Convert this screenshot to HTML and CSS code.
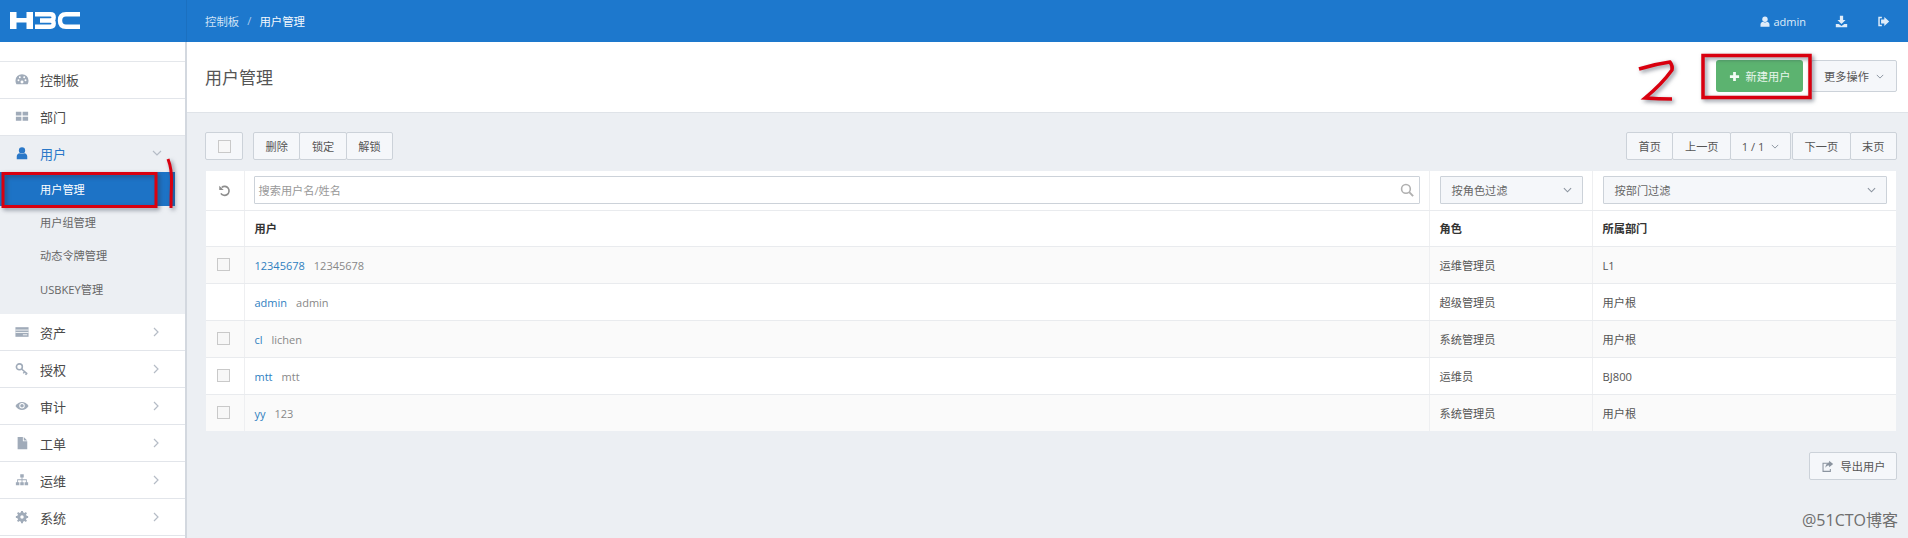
FILE: index.html
```html
<!DOCTYPE html>
<html lang="zh-CN">
<head>
<meta charset="utf-8">
<title>用户管理</title>
<link rel="stylesheet" href="styles.css">
</head>
<body>
<svg class="defs" width="0" height="0" aria-hidden="true">
  <symbol id="i-dash" viewBox="0 0 16 16"><path d="M8 2.500a7.500 7.500 0 0 0-7.500 7.500c0 1.500.4 2.800 1.100 3.900h12.800c.7-1.100 1.100-2.400 1.100-3.900A7.500 7.500 0 0 0 8 2.500z" fill="currentColor"/><g fill="#fff"><circle cx="4" cy="9.500" r="1.100"/><circle cx="5.500" cy="6" r="1.100"/><circle cx="10.500" cy="6" r="1.100"/><circle cx="12" cy="9.500" r="1.100"/><circle cx="8" cy="11.500" r="1.700"/></g></symbol>
  <symbol id="i-grid" viewBox="0 0 16 16"><path d="M1 3h6.300v4.500H1zM8.700 3H15v4.500H8.700zM1 8.800h6.300v4.500H1zM8.700 8.800H15v4.500H8.700z" fill="currentColor"/></symbol>
  <symbol id="i-user" viewBox="0 0 16 16"><circle cx="8" cy="5" r="3.600" fill="currentColor"/><path d="M2 15v-3c0-2 1.500-3.500 3.300-3.700.8.600 1.700.9 2.700.9s1.900-.3 2.700-.9C12.500 8.500 14 10 14 12v3z" fill="currentColor"/></symbol>
  <symbol id="i-card" viewBox="0 0 16 16"><path d="M.5 2.500h15v11H.5z" fill="currentColor"/><path d="M.5 5.800h15M.5 8.500h15M9 11.200h5" stroke="#fff" fill="none"/></symbol>
  <symbol id="i-key" viewBox="0 0 16 16"><circle cx="5" cy="5.500" r="3.400" fill="none" stroke="currentColor" stroke-width="1.800"/><path d="M7.500 8l6.500 5.500M11 11l-1.500 2M13.500 13l-1.500 1.500" fill="none" stroke="currentColor" stroke-width="1.800"/></symbol>
  <symbol id="i-eye" viewBox="0 0 16 16"><path d="M.5 8C2.500 5 5 3.500 8 3.500S13.500 5 15.500 8c-2 3-4.500 4.500-7.500 4.500S2.500 11 .5 8z" fill="currentColor"/><circle cx="8" cy="7.800" r="3.100" fill="#fff"/><circle cx="8" cy="7.800" r="2" fill="currentColor"/></symbol>
  <symbol id="i-file" viewBox="0 0 16 16"><path d="M3 1h6v5h5v9H3zM10 1l4 4h-4z" fill="currentColor"/></symbol>
  <symbol id="i-site" viewBox="0 0 16 16"><path d="M6 1.500h4V5H8.500v2.200H13.500V10.500H15V14h-4v-3.500h1.500V8.200h-4v2.300H10V14H6v-3.500h1.500V8.200h-4v2.300H5V14H1v-3.500h1.500V7.200h5V5H6z" fill="currentColor"/></symbol>
  <symbol id="i-cog" viewBox="0 0 16 16"><circle cx="8" cy="8" r="4" fill="none" stroke="currentColor" stroke-width="3"/><path d="M8 1v14M1 8h14M3 3l10 10M13 3L3 13" stroke="currentColor" stroke-width="2.200"/><circle cx="8" cy="8" r="2" fill="#fff"/></symbol>
  <symbol id="i-down" viewBox="0 0 10 6"><path d="M1 1l4 4 4-4" fill="none" stroke="currentColor" stroke-width="1.200"/></symbol>
  <symbol id="i-right" viewBox="0 0 6 10"><path d="M1 1l4 4-4 4" fill="none" stroke="currentColor" stroke-width="1.200"/></symbol>
  <symbol id="i-undo" viewBox="0 0 16 16"><path d="M4.500 4.300A5.500 5.500 0 1 1 3.500 11.500" fill="none" stroke="currentColor" stroke-width="2"/><path d="M1.500 2v5.500H7z" fill="currentColor"/></symbol>
  <symbol id="i-search" viewBox="0 0 16 16"><circle cx="6.800" cy="6.800" r="5" fill="none" stroke="currentColor" stroke-width="1.800"/><path d="M10.500 10.500L15 15" stroke="currentColor" stroke-width="2.200"/></symbol>
  <symbol id="i-plus" viewBox="0 0 12 12"><path d="M4.500 1h3v3.500H11v3H7.500V11h-3V7.500H1v-3h3.500z" fill="currentColor"/></symbol>
  <symbol id="i-share" viewBox="0 0 16 16"><path d="M11 4H2.500v10h9v-3" fill="none" stroke="currentColor" stroke-width="1.300"/><path d="M10 1l5 4-5 4V6.800C8 6.800 6.500 7.500 5.500 9.500 5.500 6.500 7.500 3.500 10 3.500z" fill="currentColor"/></symbol>
  <symbol id="i-dl" viewBox="0 0 16 16"><path d="M6 1h4v5h3l-5 5-5-5h3z" fill="currentColor"/><path d="M1 11h3.500L8 13.500 11.500 11H15v4H1z" fill="currentColor"/></symbol>
  <symbol id="i-out" viewBox="0 0 16 16"><path d="M6 3H2.500v10H6" fill="none" stroke="currentColor" stroke-width="1.800"/><path d="M9 2.500L15 8l-6 5.500V10.500H5v-5h4z" fill="currentColor"/></symbol>
</svg>

<header class="topbar">
  <div class="brand">
    <svg class="logo" viewBox="0 0 90 42" width="90" height="42" role="img" aria-label="H3C">
      <path d="M10 12h6.500v6h10v-6H33v17h-6.500v-6.500h-10V29H10z" fill="#fff"/>
      <path d="M35 14.200h15.300q3.400 0 3.400 3.100t-3.400 3.200H40M50.300 20.500q3.400 0 3.400 3.100t-3.400 3.200H35" fill="none" stroke="#fff" stroke-width="4.400"/>
      <path d="M80 14.200H66q-6 0-6 6.300t6 6.300h14" fill="none" stroke="#fff" stroke-width="4.400"/>
    </svg>
  </div>
  <nav class="crumbs"><span>控制板</span><span class="sep">/</span><span class="here">用户管理</span></nav>
  <div class="tools">
    <span class="tool-user"><svg class="ico12"><use href="#i-user"/></svg>admin</span>
    <svg class="ico13 tool-dl"><use href="#i-dl"/></svg>
    <svg class="ico13 tool-out"><use href="#i-out"/></svg>
  </div>
</header>

<div class="body">
  <aside class="side">
    <div class="item raised"><svg class="mi"><use href="#i-dash"/></svg>控制板</div>
    <div class="item raised"><svg class="mi"><use href="#i-grid"/></svg>部门</div>
    <div class="group">
      <div class="item open raised"><svg class="mi"><use href="#i-user"/></svg>用户<svg class="chev-d"><use href="#i-down"/></svg></div>
      <div class="sub active">用户管理</div>
      <div class="sub">用户组管理</div>
      <div class="sub">动态令牌管理</div>
      <div class="sub">USBKEY管理</div>
    </div>
    <div class="item"><svg class="mi"><use href="#i-card"/></svg>资产<svg class="chev-r"><use href="#i-right"/></svg></div>
    <div class="item"><svg class="mi"><use href="#i-key"/></svg>授权<svg class="chev-r"><use href="#i-right"/></svg></div>
    <div class="item"><svg class="mi"><use href="#i-eye"/></svg>审计<svg class="chev-r"><use href="#i-right"/></svg></div>
    <div class="item"><svg class="mi"><use href="#i-file"/></svg>工单<svg class="chev-r"><use href="#i-right"/></svg></div>
    <div class="item"><svg class="mi"><use href="#i-site"/></svg>运维<svg class="chev-r"><use href="#i-right"/></svg></div>
    <div class="item"><svg class="mi"><use href="#i-cog"/></svg>系统<svg class="chev-r"><use href="#i-right"/></svg></div>
  </aside>

  <main class="main">
    <div class="head">
      <h1 class="title">用户管理</h1>
      <div class="head-actions">
        <button class="btn-new"><svg class="ico-plus"><use href="#i-plus"/></svg>新建用户</button>
        <button class="btn more">更多操作<svg class="chev-d"><use href="#i-down"/></svg></button>
      </div>
    </div>

    <div class="content">
      <div class="toolbar">
        <button class="btn check-btn"><span class="box"></span></button>
        <div class="btn-group">
          <button class="btn">删除</button><button class="btn">锁定</button><button class="btn">解锁</button>
        </div>
        <div class="pager btn-group">
          <button class="btn">首页</button><button class="btn">上一页</button><button class="btn page-now">1 / 1<svg class="chev-d"><use href="#i-down"/></svg></button><button class="btn page-next">下一页</button><button class="btn">末页</button>
        </div>
      </div>

      <table class="grid">
        <colgroup><col class="c1"><col><col class="c3"><col class="c4"></colgroup>
        <tr class="filter">
          <td class="ck"><svg class="ico-undo"><use href="#i-undo"/></svg></td>
          <td><div class="search"><span>搜索用户名/姓名</span><svg class="ico-search"><use href="#i-search"/></svg></div></td>
          <td><div class="select">按角色过滤<svg class="chev-d"><use href="#i-down"/></svg></div></td>
          <td><div class="select">按部门过滤<svg class="chev-d"><use href="#i-down"/></svg></div></td>
        </tr>
        <tr class="heads"><th></th><th>用户</th><th>角色</th><th>所属部门</th></tr>
        <tr class="row odd"><td class="ck"><span class="box"></span></td><td><a class="name">12345678</a><span class="real">12345678</span></td><td>运维管理员</td><td>L1</td></tr>
        <tr class="row"><td class="ck"></td><td><a class="name">admin</a><span class="real">admin</span></td><td>超级管理员</td><td>用户根</td></tr>
        <tr class="row odd"><td class="ck"><span class="box"></span></td><td><a class="name">cl</a><span class="real">lichen</span></td><td>系统管理员</td><td>用户根</td></tr>
        <tr class="row"><td class="ck"><span class="box"></span></td><td><a class="name">mtt</a><span class="real">mtt</span></td><td>运维员</td><td>BJ800</td></tr>
        <tr class="row odd"><td class="ck"><span class="box"></span></td><td><a class="name">yy</a><span class="real">123</span></td><td>系统管理员</td><td>用户根</td></tr>
      </table>

      <div class="foot">
        <button class="btn export"><svg class="ico13"><use href="#i-share"/></svg>导出用户</button>
      </div>
    </div>
  </main>
</div>

<div class="watermark">@51CTO博客</div>

<svg class="marks" width="1908" height="538" aria-hidden="true">
  <rect class="mark" x="3" y="173.500" width="153" height="33"/>
  <path class="mark" d="M168 159q4 10 3.500 24t-.5 25"/>
  <rect class="mark thick" x="1703" y="55.500" width="107" height="42"/>
  <path class="mark thick" d="M1639 69q16-5 31-7 3 4 2 8-10 14-27 28 14 1 27 1"/>
</svg>
</body>
</html>
```
FILE: styles.css
```css
* { box-sizing: border-box; }
html, body { margin: 0; height: 538px; overflow: hidden; }
body {
  position: relative;
  font-family: "Open Sans", "Noto Sans CJK SC", sans-serif;
  font-size: 11.2px;
  color: #555;
  background: #eceff3;
}
.defs { position: absolute; }
button { font: inherit; color: inherit; margin: 0; cursor: pointer; }

/* top bar */
.topbar { height: 42px; background: #1d78cd; display: flex; align-items: center; color: #fff; }
.brand { width: 187px; height: 42px; flex: none; border-right: 1px solid #1b70c0; }
.logo { display: block; }
.crumbs { margin-left: 18px; display: flex; color: #cfe2f6; font-size: 11.4px; }
.sep { margin: 0 8px; color: #a9cbee; }
.here { color: #f4f8fd; }
.tools { margin-left: auto; margin-right: 18px; display: flex; align-items: center; color: #dfecf9; }
.tool-user { display: flex; align-items: center; gap: 2px; font-size: 11px; }
.tool-dl { margin-left: 29px; }
.tool-out { margin-left: 29px; }
.ico12 { width: 12px; height: 13px; }
.ico13 { width: 13px; height: 13px; }

/* layout */
.body { display: flex; height: 496px; }

/* sidebar */
.side {
  width: 187px; flex: none; padding-top: 19px;
  background: #fff; border-right: 2px solid #d3d8df;
}
.side > .item:first-child { border-top: 1px solid #e4e7eb; height: 38px; }
.item {
  height: 37px; display: flex; align-items: center;
  padding-left: 15px; font-size: 13px; color: #4a4a4a;
  background: #fff; border-bottom: 1px solid #e2e5ea;
}
.item.raised { padding-bottom: 2px; }
.mi { width: 14px; height: 14px; margin-right: 11px; color: #a0abb9; flex: none; }
.chev-r { width: 6px; height: 10px; margin-left: auto; margin-right: 26px; color: #b5bcc6; }
.item .chev-d { width: 10px; height: 6px; margin-left: auto; margin-right: 23px; color: #b5bcc6; }
.group { background: #eceff3; height: 178px; }
.group .item { background: transparent; border-bottom: 0; height: 36px; }
.open { color: #2a78c8; }
.open .mi { color: #2a78c8; }
.sub { height: 33.500px; padding-bottom: 1px; display: flex; align-items: center; padding-left: 40px; color: #666; }
.sub.active { background: #1d73c6; color: #fff; width: 175px; padding-bottom: 0; }

/* main */
.main { flex: 1; min-width: 0; display: flex; flex-direction: column; }
.head {
  height: 71px; background: #fff; border-bottom: 1px solid #dfe3e8;
  display: flex; align-items: center; justify-content: space-between;
  padding: 0 11px 2px 18px;
}
.title { margin: 0; font-size: 17px; font-weight: 400; color: #555; }
.head-actions { display: flex; gap: 8px; }
.btn-new {
  width: 87px; height: 32px; border: 0; border-radius: 3px;
  background: #5cb370; color: #e9f6ec;
  display: flex; align-items: center; justify-content: center; gap: 6px;
}
.ico-plus { width: 11px; height: 11px; color: #f4fbf5; }
.btn {
  height: 28px; padding: 0 11.500px; background: #f5f7fa;
  border: 1px solid #ccd2d9; border-radius: 2px; color: #555;
  display: inline-flex; align-items: center;
}
.btn .chev-d { width: 8px; height: 5px; color: #8b949f; }
.more { width: 86px; height: 32px; gap: 7px; justify-content: center; padding: 0; }

/* content */
.content { flex: 1; padding: 19px 11px 0 18px; }
.toolbar { display: flex; gap: 10px; height: 28px; margin-bottom: 11px; }
.check-btn { width: 38px; padding: 0; justify-content: center; }
.box { display: block; width: 13px; height: 13px; background: #f7f7f7; border: 1px solid #c9c9c9; }
.btn-group { display: flex; }
.btn-group .btn + .btn { margin-left: -1px; }
.pager { margin-left: auto; }
.page-now { width: 61px; padding: 0; gap: 7px; justify-content: center; }
.page-next { margin-left: 1px !important; }

/* table */
.grid {
  width: 1690px; margin-left: 1px; table-layout: fixed;
  border-collapse: collapse; background: #fff;
}
.c1 { width: 38px; }
.c3 { width: 163px; }
.c4 { width: 304px; }
.grid td, .grid th {
  padding: 0 9px 0 10px; border-bottom: 1px solid #e9ebee;
  border-right: 1px solid #eeeff1; text-align: left;
}
.grid td:last-child, .grid th:last-child { border-right: 0; }
.filter td { height: 39px; }
.heads th { height: 36px; font-weight: 700; color: #333; }
.grid .row td { height: 37px; padding-top: 1px; }
.row:last-child td { border-bottom: 0; }
.odd { background: #fafafa; }
.grid .row .ck, .grid .filter .ck { padding: 0 0 0 11px; }
.ico-undo { display: block; width: 13px; height: 13px; color: #8d8d8d; margin-left: 1px; }
.name { color: #2f80bf; font-size: 11px; margin-right: 9px; }
.real { color: #888; font-size: 11px; }
.search, .select {
  height: 28px; display: flex; align-items: center; justify-content: space-between;
  border: 1px solid #ccd2d9; border-radius: 1px;
}
.search { padding: 0 5px 0 4px; margin-left: -1px; color: #999; background: #fff; }
.ico-search { width: 14px; height: 14px; color: #b0b0b0; }
.select { padding: 0 10px 0 11px; background: #f5f7fa; color: #666; }
.select .chev-d { width: 9px; height: 6px; color: #8b949f; }

.foot { display: flex; justify-content: flex-end; margin-top: 21px; }
.export { width: 88px; gap: 7px; justify-content: center; padding: 0; }
.export .ico13 { color: #8b949f; }

/* overlays */
.watermark { position: absolute; right: 10px; top: 510px; font-size: 16px; color: #6e6e6e; line-height: 21px; }
.marks { position: absolute; left: 0; top: 0; pointer-events: none; }
.mark {
  fill: none; stroke: #d9000f; stroke-width: 3;
  filter: drop-shadow(2px 2px 2px rgba(40, 50, 70, .55));
}
.thick { stroke-width: 3.500; }
```
